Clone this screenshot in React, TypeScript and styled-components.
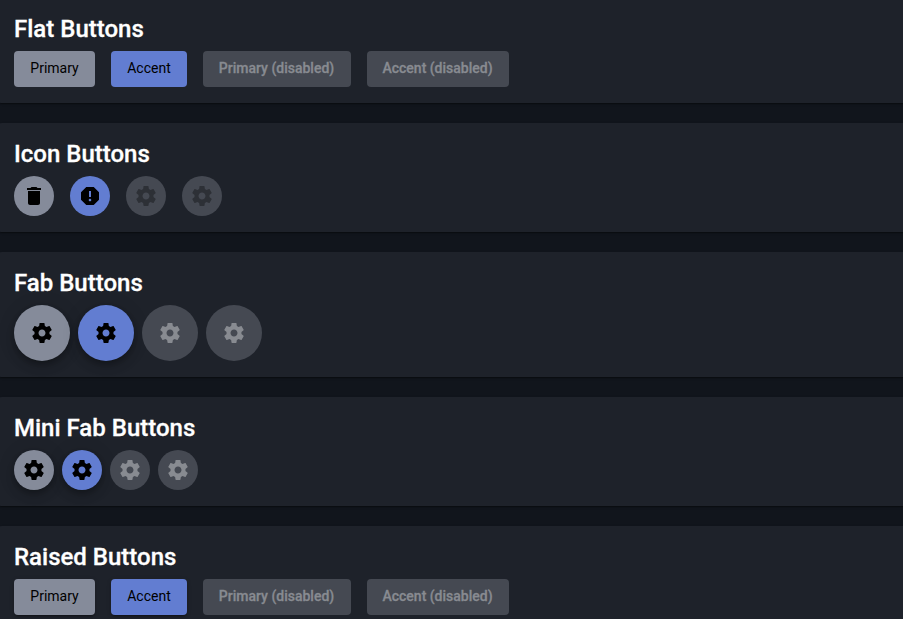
import React from "react";
import styled, { createGlobalStyle, css } from "styled-components";

type Tone = "primary" | "accent" | "disabled";

const Global = createGlobalStyle`
  html { background: #fff; }
  body { margin: 0; overflow: hidden; font-family: Roboto, sans-serif; }
  *, *::before, *::after { box-sizing: border-box; }
`;

const Page = styled.main`
  height: 619px;
  overflow: hidden;
  background: #11151c;
  display: flex;
  flex-direction: column;
  gap: 20px;
`;

const Card = styled.section<{ $first?: boolean }>`
  flex: none;
  margin: ${(p) => (p.$first ? "-2px" : "0")} -10px 0 -2px;
  padding: 16px;
  background: #1e222a;
  border-radius: 4px;
  box-shadow: 0 2px 1px -1px rgba(0, 0, 0, 0.2), 0 1px 1px 0 rgba(0, 0, 0, 0.14),
    0 1px 3px 0 rgba(0, 0, 0, 0.12);
`;

const Title = styled.h2`
  margin: 0 0 7px;
  font-size: 24px;
  line-height: 30px;
  font-weight: 500;
  color: #fff;
  -webkit-text-stroke: 0.3px currentColor;
`;

const Row = styled.div<{ $gap: number }>`
  display: flex;
  gap: ${(p) => p.$gap}px;
`;

const tones = {
  primary: css`
    background: #858b9a;
    color: #000;
  `,
  accent: css`
    background: #627dd1;
    color: #000;
  `,
  disabled: css`
    background: #454952;
    color: #888b91;
  `,
};

const TextButton = styled.button<{ $tone: Tone; $width: number; $raised?: boolean }>`
  ${(p) => tones[p.$tone]}
  width: ${(p) => p.$width}px;
  height: 36px;
  padding: 0 0 1px;
  border: 0;
  border-radius: 4px;
  font: ${(p) => (p.$tone === "disabled" ? 500 : 400)} 14px / 35px Roboto, sans-serif;
  white-space: nowrap;
  ${(p) =>
    p.$tone === "disabled" &&
    css`
      padding-right: 1px;
      -webkit-text-stroke: 0.3px currentColor;
    `}
  ${(p) =>
    p.$raised &&
    p.$tone !== "disabled" &&
    css`
      box-shadow: 0 3px 1px -2px rgba(0, 0, 0, 0.2), 0 2px 2px 0 rgba(0, 0, 0, 0.14),
        0 1px 5px 0 rgba(0, 0, 0, 0.12);
    `}
`;

const RoundButton = styled.button<{ $tone: Tone; $size: number; $raised?: boolean }>`
  ${(p) => tones[p.$tone]}
  display: flex;
  align-items: center;
  justify-content: center;
  width: ${(p) => p.$size}px;
  height: ${(p) => p.$size}px;
  padding: 0;
  border: 0;
  border-radius: 50%;
  ${(p) =>
    p.$tone === "disabled" &&
    !p.$raised &&
    css`
      color: #2d3036;
    `}
  ${(p) =>
    p.$tone !== "disabled" &&
    p.$raised &&
    css`
      box-shadow: 0 3px 5px -1px rgba(0, 0, 0, 0.2), 0 6px 10px 0 rgba(0, 0, 0, 0.14),
        0 1px 18px 0 rgba(0, 0, 0, 0.12);
    `}
`;

const Glyph = styled.svg`
  width: 24px;
  height: 24px;
  fill: currentColor;
`;

const paths = {
  trash: "M6 19c0 1.1.9 2 2 2h8c1.1 0 2-.9 2-2V7H6v12zM19 4h-3.5l-1-1h-5l-1 1H5v2h14V4z",
  report:
    "M15.73 3H8.27L3 8.27v7.46L8.27 21h7.46L21 15.73V8.27L15.73 3zM12 17.3c-.72 0-1.3-.58-1.3-1.3 0-.72.58-1.3 1.3-1.3.72 0 1.3.58 1.3 1.3 0 .72-.58 1.3-1.3 1.3zm1-4.3h-2V7h2v6z",
  gear: "M19.43 12.98c.04-.32.07-.64.07-.98s-.03-.66-.07-.98l2.11-1.65c.19-.15.24-.42.12-.64l-2-3.46c-.12-.22-.39-.3-.61-.22l-2.49 1c-.52-.4-1.08-.73-1.69-.98l-.38-2.65C14.46 2.18 14.25 2 14 2h-4c-.25 0-.46.18-.49.42l-.38 2.65c-.61.25-1.17.59-1.69.98l-2.49-1c-.23-.09-.49 0-.61.22l-2 3.46c-.13.22-.07.49.12.64l2.11 1.65c-.04.32-.07.65-.07.98s.03.66.07.98l-2.11 1.65c-.19.15-.24.42-.12.64l2 3.46c.12.22.39.3.61.22l2.49-1c.52.4 1.08.73 1.69.98l.38 2.65c.03.24.24.42.49.42h4c.25 0 .46-.18.49-.42l.38-2.65c.61-.25 1.17-.59 1.69-.98l2.49 1c.23.09.49 0 .61-.22l2-3.46c.12-.22.07-.49-.12-.64l-2.11-1.65zM12 15.5c-1.93 0-3.5-1.57-3.5-3.5s1.57-3.5 3.5-3.5 3.5 1.57 3.5 3.5-1.57 3.5-3.5 3.5z",
};

const Icon = ({ name }: { name: keyof typeof paths }) => (
  <Glyph viewBox="0 0 24 24" aria-hidden="true">
    <path d={paths[name]} />
  </Glyph>
);

const TextButtons = ({ raised }: { raised?: boolean }) => (
  <Row $gap={16}>
    <TextButton $tone="primary" $width={81} $raised={raised}>Primary</TextButton>
    <TextButton $tone="accent" $width={76} $raised={raised}>Accent</TextButton>
    <TextButton $tone="disabled" $width={148} disabled>Primary (disabled)</TextButton>
    <TextButton $tone="disabled" $width={142} disabled>Accent (disabled)</TextButton>
  </Row>
);

const roundTones: Tone[] = ["primary", "accent", "disabled", "disabled"];

const RoundButtons = ({
  size,
  gap,
  raised,
  icons,
}: {
  size: number;
  gap: number;
  raised?: boolean;
  icons: (keyof typeof paths)[];
}) => (
  <Row $gap={gap}>
    {roundTones.map((tone, i) => (
      <RoundButton key={i} $tone={tone} $size={size} $raised={raised} disabled={tone === "disabled"}>
        <Icon name={icons[i]} />
      </RoundButton>
    ))}
  </Row>
);

const gears: (keyof typeof paths)[] = ["gear", "gear", "gear", "gear"];

export default function App() {
  return (
    <>
      <Global />
      <Page>
        <Card $first>
          <Title>Flat Buttons</Title>
          <TextButtons />
        </Card>
        <Card>
          <Title>Icon Buttons</Title>
          <RoundButtons size={40} gap={16} icons={["trash", "report", "gear", "gear"]} />
        </Card>
        <Card>
          <Title>Fab Buttons</Title>
          <RoundButtons size={56} gap={8} raised icons={gears} />
        </Card>
        <Card>
          <Title>Mini Fab Buttons</Title>
          <RoundButtons size={40} gap={8} raised icons={gears} />
        </Card>
        <Card>
          <Title>Raised Buttons</Title>
          <TextButtons raised />
        </Card>
      </Page>
    </>
  );
}
